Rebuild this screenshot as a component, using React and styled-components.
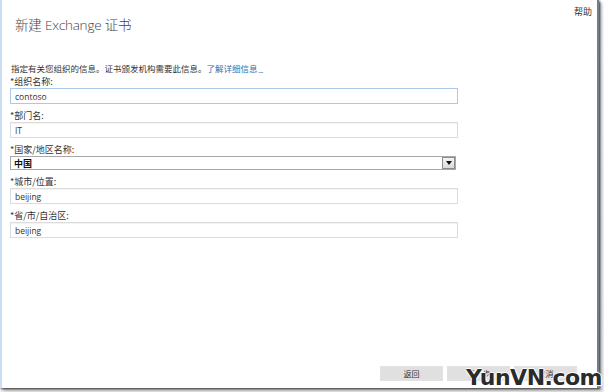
import React from 'react'
import styled, { createGlobalStyle } from 'styled-components'

const GlobalStyle = createGlobalStyle`
  html, body {
    margin: 0;
    padding: 0;
    background: #fff;
  }
  body {
    font-family: "Segoe UI", "Noto Sans", "Noto Sans CJK SC", sans-serif;
  }
`

const Screen = styled.div`
  position: relative;
  width: 604px;
  height: 392px;
  background: linear-gradient(#fff, #f2f2f2);
  overflow: hidden;
`

const Window = styled.div`
  box-sizing: border-box;
  width: 599px;
  height: 388px;
  display: flex;
  flex-direction: column;
  background: #fff;
  border-left: 2px solid #c9ddf3;
  border-right: 2px solid #6f7f92;
  box-shadow: 1px 1px 2px rgba(0, 0, 0, 0.7), 3px 3px 3px rgba(0, 0, 0, 0.25);
`

const Header = styled.div`
  display: flex;
  justify-content: space-between;
  align-items: flex-start;
  padding: 0 5px 0 13px;
`

const Title = styled.h1`
  margin: 13px 0 0;
  font-family: "Open Sans", "Noto Sans CJK SC", sans-serif;
  font-weight: 300;
  font-size: 13.5px;
  line-height: 24px;
  letter-spacing: -0.2px;
  color: #444;
`

const Help = styled.a`
  margin-top: 6px;
  font-family: "Noto Sans CJK SC", sans-serif;
  font-size: 9px;
  line-height: 12px;
  color: #333;
  text-decoration: none;
`

const Body = styled.div`
  display: flex;
  flex-direction: column;
  padding: 25px 0 0 8px;
`

const Intro = styled.p`
  margin: 0 0 2px 1px;
  font-family: "Noto Sans CJK SC", sans-serif;
  font-size: 8.5px;
  line-height: 12px;
  color: #333;
`

const MoreLink = styled.a`
  color: #2f6fae;
  text-decoration: none;
  &::after {
    content: '_';
    margin-left: 1px;
  }
`

const Field = styled.div`
  display: flex;
  flex-direction: column;
  width: 448px;
  margin-bottom: 6px;
`

const Label = styled.label`
  font-family: "Noto Sans CJK SC", sans-serif;
  font-size: 9px;
  line-height: 12px;
  height: 12px;
  color: #333;
`

const TextBox = styled.input`
  box-sizing: border-box;
  width: 100%;
  height: 16px;
  margin: 0;
  padding: 0 4px;
  border: 1px solid ${p => (p.$focused ? '#a9c9ea' : '#dcdcdc')};
  box-shadow: ${p => (p.$focused ? 'none' : 'inset 0 1px 0 #f3f3f3')};
  font-family: "Open Sans", "Noto Sans", sans-serif;
  font-size: 8.5px;
  color: #333;
  background: #fff;
  outline: none;
`

const SelectBox = styled.div`
  box-sizing: border-box;
  width: 446px;
  height: 14px;
  display: flex;
  align-items: center;
  justify-content: space-between;
  border: 1px solid #a8a8a8;
  padding-left: 3px;
  font-family: "Noto Sans CJK SC", sans-serif;
  font-size: 9px;
  font-weight: 700;
  color: #111;
`

const DropButton = styled.span`
  box-sizing: border-box;
  width: 13px;
  height: 12px;
  display: flex;
  align-items: center;
  justify-content: center;
  border: 1px solid #8c8c8c;
  background: linear-gradient(#f4f4f4, #dadada);
`

const Footer = styled.div`
  margin-top: auto;
  display: flex;
  justify-content: flex-end;
  gap: 4px;
  padding: 0 20px 7px 0;
`

const Button = styled.button`
  width: 63px;
  height: 15px;
  margin: 0;
  padding: 0;
  border: 1px solid #e2e2e2;
  background: #e0e0e0;
  font-family: "Noto Sans CJK SC", sans-serif;
  font-size: 8px;
  color: #333;
`

const Watermark = styled.div`
  position: absolute;
  right: 2px;
  bottom: 3px;
  font-family: "DejaVu Sans", sans-serif;
  font-weight: 900;
  font-size: 22px;
  line-height: 22px;
  letter-spacing: -0.5px;
  color: #2b2b2b;
  text-shadow: -1px 0 #fff, 1px 0 #fff, 0 -1px #fff, 0 1px #fff, 1px 1px 2px #fff;
`

const fields = [
  { label: '*组织名称:', value: 'contoso', focused: true },
  { label: '*部门名:', value: 'IT' },
  { label: '*国家/地区名称:', value: '中国', select: true },
  { label: '*城市/位置:', value: 'beijing' },
  { label: '*省/市/自治区:', value: 'beijing' },
]

export default function App() {
  return (
    <Screen>
      <GlobalStyle />
      <Window>
        <Header>
          <Title>新建 Exchange 证书</Title>
          <Help href="#">帮助</Help>
        </Header>
        <Body>
          <Intro>
            指定有关您组织的信息。证书颁发机构需要此信息。<MoreLink href="#">了解详细信息</MoreLink>
          </Intro>
          {fields.map(f => (
            <Field key={f.label}>
              <Label>{f.label}</Label>
              {f.select ? (
                <SelectBox>
                  {f.value}
                  <DropButton>
                    <svg width="6" height="4" viewBox="0 0 6 4">
                      <path d="M0 0h6L3 4z" fill="#111" />
                    </svg>
                  </DropButton>
                </SelectBox>
              ) : (
                <TextBox defaultValue={f.value} $focused={f.focused} readOnly />
              )}
            </Field>
          ))}
        </Body>
        <Footer>
          <Button>返回</Button>
          <Button>下一步</Button>
          <Button>取消</Button>
        </Footer>
      </Window>
      <Watermark>YunVN.com</Watermark>
    </Screen>
  )
}
